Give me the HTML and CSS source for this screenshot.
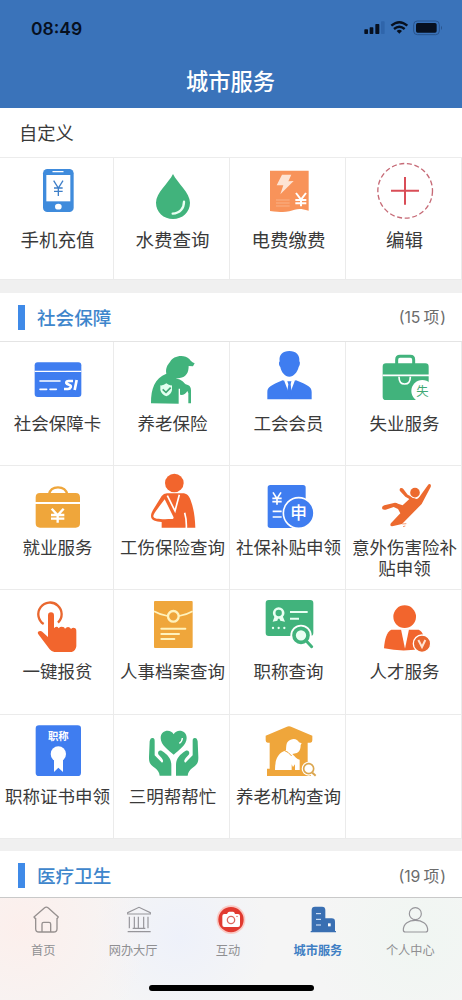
FILE: index.html
```html
<!DOCTYPE html>
<html lang="zh-CN">
<head>
<meta charset="utf-8">
<title>城市服务</title>
<link rel="stylesheet" href="styles.css">
</head>
<body>
<div class="app">
  <header class="top">
    <div class="status">
      <span class="time">08:49</span>
      <svg class="signals" width="80" height="20" viewBox="1089 54 240 60">
        <g fill="#07101f"><rect x="1093" y="88" width="11" height="14" rx="2"/><rect x="1109" y="82" width="11" height="20" rx="2"/><rect x="1126" y="72" width="12" height="30" rx="2"/><rect x="1248" y="69" width="62" height="29" rx="5"/><path d="M1190 93q8-7 16 0l-8 8z"/></g>
        <rect x="1143" y="64" width="11" height="38" rx="2" fill="#2f65ab"/>
        <g fill="none" stroke="#07101f" stroke-width="7"><path d="M1174 77q24-21 48 0"/><path d="M1182 87q16-14 32 0"/></g>
        <rect x="1241" y="63" width="77" height="41" rx="11" fill="none" stroke="#29548d" stroke-width="3"/><path d="M1323 77q6 6 0 13z" fill="#29548d"/>
      </svg>
    </div>
    <h1 class="title">城市服务</h1>
  </header>

  <section>
    <h2 class="custom-head">自定义</h2>
    <div class="grid grid-custom">
      <div class="cell">
        <svg class="icon" viewBox="22 9 300 213"><rect x="127" y="42" width="92" height="129" rx="13" fill="#3f8bdc"/><rect x="137" y="60" width="72" height="79" fill="#fff"/><path d="M157 50h30" stroke="#fff" stroke-width="4" stroke-linecap="round"/><ellipse cx="173" cy="155" rx="10" ry="8.500" fill="#fff"/><path d="M159 77l14 22 14-22M173 98v25M160 99h26M160 109h26" fill="none" stroke="#3f7fc8" stroke-width="4"/></svg>
        <span class="label">手机充值</span>
      </div>
      <div class="cell">
        <svg class="icon" viewBox="369 9 300 213"><path d="M519 57C506 84 468 113 468 143c0 28 23 49 51 49s51-21 51-49c0-30-38-59-51-86z" fill="#41b37c"/><path d="M552 140c0 20-12 35-34 36" fill="none" stroke="#eafff3" stroke-width="7" stroke-linecap="round"/></svg>
        <span class="label">水费查询</span>
      </div>
      <div class="cell">
        <svg class="icon" viewBox="22 9 300 213"><path d="M115 47h116v120c-28-9-38-5-58 2-18 4-29 2-58-1z" fill="#f8935a"/><path d="M151 59h28l-9 20 16-1-40 40 9-27h-20z" fill="#fde3d3"/><path d="M133 135h41M133 144h41M133 153h41" stroke="#fbc19d" stroke-width="2"/><path d="M193 114l15 20 15-20M208 132v22M191 135h33M191 145h33" fill="none" stroke="#fff" stroke-width="6"/></svg>
        <span class="label">电费缴费</span>
      </div>
      <div class="cell">
        <svg class="icon" viewBox="372 9 300 213"><circle cx="522.500" cy="107.500" r="82" fill="none" stroke="#c66a76" stroke-width="4" stroke-dasharray="15 8"/><path d="M522 66v83M480 107h84" stroke="#d94d57" stroke-width="6"/></svg>
        <span class="label">编辑</span>
      </div>
    </div>
  </section>

  <section class="group">
    <div class="group-head"><i class="bar"></i><h2 class="group-title">社会保障</h2><span class="count">(15<span class="unit">项</span>)</span></div>
    <div class="grid grid-services">
      <div class="cell">
        <svg class="icon" viewBox="22 171 300 213"><rect x="102" y="232" width="140" height="104" rx="9" fill="#3f7df0"/><path d="M102 259h140" stroke="#fff" stroke-width="4"/><path d="M118 288h60M118 313h20M148 313h19" stroke="#fff" stroke-width="5" stroke-linecap="round"/><path d="M217 288h-13q-8 0-7 6 1 3 8 5 7 2 5 8-2 5-8 5h-12M228 285l-6 30" fill="none" stroke="#fff" stroke-width="8"/></svg>
        <span class="label">社会保障卡</span>
      </div>
      <div class="cell">
        <svg class="icon" viewBox="369 171 300 213"><path d="M453 355c0-45 11-75 46-89-3-17 4-27 11-35 8-19 43-25 58-9 5 6 8 10 16 13l-5 9-13-1c0 19-7 34-27 36l-12 2c16 0 23 10 30 17 13 3 16 9 16 19v38h-8v-30l-3-7c-6 12-18 14-24 10l-1 28z" fill="#41b37c"/><path d="M538 311v46" stroke="#fff" stroke-width="4"/><path d="M499 295q8 7 17 6v14q-2 13-17 19-15-6-18-19v-14q10 1 18-6z" fill="#e3fff0"/><path d="M488 313l10 9 14-14" fill="none" stroke="#41a875" stroke-width="5"/></svg>
        <span class="label">养老保险</span>
      </div>
      <div class="cell">
        <svg class="icon" viewBox="22 171 300 213"><path d="M144 229c-3-20 9-31 29-31s32 11 30 31c3 2 2 13-2 17-4 16-15 29-28 29s-24-13-27-29c-5-4-5-15-2-17zM107 343v-22c0-14 10-20 46-35l20 6 20-6c38 15 47 21 47 35v22z" fill="#3f7df0"/><path d="M157 286l12 31 4-10 5 10 12-31-17 4z" fill="#fff"/><path d="M167 289h12l-2 9 4 33-8 12-8-12 5-33z" fill="#3f7df0"/></svg>
        <span class="label">工会会员</span>
      </div>
      <div class="cell">
        <svg class="icon" viewBox="372 171 300 213"><path d="M497 240v-16q0-10 10-10h31q10 0 10 10v16" fill="none" stroke="#41b37c" stroke-width="9"/><rect x="455" y="235" width="138" height="110" rx="10" fill="#41b37c"/><path d="M455 271h139M504 275q0 22 17 22t17-22" fill="none" stroke="#fff" stroke-width="5"/><circle cx="574" cy="318" r="33" fill="#fff"/><text x="574" y="332" text-anchor="middle" class="cjk" font-size="37" fill="#41a875">失</text></svg>
        <span class="label">失业服务</span>
      </div>

      <div class="cell">
        <svg class="icon" viewBox="22 3 300 213"><path d="M145 88q4-21 27-21t28 21" fill="none" stroke="#efa63b" stroke-width="7"/><path d="M105 111V97q0-13 13-13h107q13 0 13 13v14zM105 117h133v58q0 13-13 13H118q-13 0-13-13z" fill="#efa63b"/><path d="M153 131l18 20 18-20M171 148v25M151 150h40M151 161h40" fill="none" stroke="#fff" stroke-width="7"/></svg>
        <span class="label">就业服务</span>
      </div>
      <div class="cell">
        <svg class="icon" viewBox="369 3 300 213"><circle cx="523" cy="54" r="28" fill="#f2652d"/><path d="M485 188v-17c-18-2-32-4-32-18 0-7 3-12 6-18l26-42q6-8 16-8h46c14 0 20 7 25 21 9 24 13 49 14 82z" fill="#f2652d"/><path d="M494 103l26 52c2 5 0 7-5 7-28 1-56 1-55-9 0-7 19-29 34-50z" fill="#fff"/><path d="M502 92l23 46 13-49M554 143q6 20 5 46" fill="none" stroke="#fff" stroke-width="5"/></svg>
        <span class="label">工伤保险查询</span>
      </div>
      <div class="cell">
        <svg class="icon" viewBox="22 3 300 213"><rect x="108" y="60" width="114" height="129" rx="8" fill="#3f7df0"/><path d="M124 82l12 19 12-19M136 99v20M122 100h28M122 110h28M123 139h27M123 156h27" fill="none" stroke="#fff" stroke-width="5"/><circle cx="201" cy="144" r="46" fill="#3f7df0" stroke="#fff" stroke-width="5"/><text x="201" y="163" text-anchor="middle" class="cjk" font-size="50" font-weight="500" fill="#fff">申</text></svg>
        <span class="label">社保补贴申领</span>
      </div>
      <div class="cell">
        <svg class="icon" viewBox="372 3 300 213"><path d="M591 60q3-5 7-2 3 3 1 8l-27 51-59 60-26 6q-9 2-9-4 0-4 6-9l24-25-7-13-13-6-24 8q-11 2-11-5 0-6 7-8l32-8q5 0 9 3l14 5 20-19-12-7-16-17q-3-6 2-9 5-1 8 3l13 17 26 13q5 0 9-6z" fill="#ec6a2f"/><circle cx="552" cy="83" r="17" fill="#fff"/><circle cx="552" cy="83" r="14.500" fill="#ec6a2f"/><path d="M514 177l12-1M516 185l7-2" stroke="#ec6a2f" stroke-width="2"/></svg>
        <span class="label">意外伤害险补贴申领</span>
      </div>

      <div class="cell">
        <svg class="icon" viewBox="22 0 300 213"><path d="M129 102a35 35 0 1 1 43-4" fill="none" stroke="#e9672f" stroke-width="7"/><path d="M142 141V77q0-10 9-10t9 10v38q4-7 11-4l3 4q6-7 16-3l3 4q7-8 15-3l3 4q6-6 13-2 4 4 3 11v43q-2 14-14 17h-52q-9-1-14-8l-34-45q-4-7 2-9 7-4 13 4z" fill="#f2652d"/></svg>
        <span class="label">一键报贫</span>
      </div>
      <div class="cell">
        <svg class="icon" viewBox="369 0 300 213"><rect x="462" y="33" width="116" height="141" rx="3" fill="#efa63b"/><path d="M462 64q19 11 41 14M537 78q22-3 41-14" fill="none" stroke="#fff2bd" stroke-width="5"/><circle cx="520" cy="79" r="16" fill="#efa63b" stroke="#fff2bd" stroke-width="7"/><path d="M484 116h72M484 132h53M484 147h39" stroke="#fff2bd" stroke-width="6" stroke-linecap="round"/></svg>
        <span class="label">人事档案查询</span>
      </div>
      <div class="cell">
        <svg class="icon" viewBox="22 0 300 213"><rect x="102" y="30" width="143" height="108" rx="9" fill="#41b37c"/><path d="M130 76l-7 19 14-3 4-11 5 11 14 3-8-19" fill="#e9fff2"/><circle cx="141" cy="69" r="13.500" fill="#41b37c" stroke="#e9fff2" stroke-width="8"/><path d="M175 66h53M175 86h27" stroke="#e9fff2" stroke-width="6"/><g fill="#e9fff2"><circle cx="124" cy="114" r="3.500"/><circle cx="141" cy="114" r="3.500"/><circle cx="158" cy="114" r="3.500"/></g><circle cx="208" cy="136" r="32" fill="#fff"/><path d="M224 153l16 17" stroke="#41b37c" stroke-width="9" stroke-linecap="round"/><circle cx="208" cy="136" r="21" fill="#eafff3" stroke="#41b37c" stroke-width="11"/></svg>
        <span class="label">职称查询</span>
      </div>
      <div class="cell">
        <svg class="icon" viewBox="372 0 300 213"><circle cx="521" cy="80" r="34" fill="#f2652d"/><path d="M459 175c2-27 8-50 22-56h82c14 6 19 26 21 55q-65 14-125 1z" fill="#f2652d"/><path d="M510 118l12 58 12-58z" fill="#fff"/><circle cx="573" cy="161" r="26" fill="#e9672f" stroke="#fff" stroke-width="4"/><path d="M562 150l11 21 10-21" fill="none" stroke="#ffe3d2" stroke-width="6"/></svg>
        <span class="label">人才服务</span>
      </div>

      <div class="cell">
        <svg class="icon" viewBox="22 3 300 213"><rect x="105" y="34" width="136" height="152" rx="10" fill="#3f7df0"/><text x="173" y="78" text-anchor="middle" class="cjk" font-size="31" font-weight="700" fill="#fff">职称</text><path d="M160 132h27v42l-14-13-13 13z" fill="#fff"/><circle cx="173" cy="120" r="23" fill="#fff"/></svg>
        <span class="label">职称证书申领</span>
      </div>
      <div class="cell">
        <svg class="icon" viewBox="369 3 300 213"><g fill="#41b37c"><path d="M521 122c-15-13-39-29-39-50 0-25 31-28 39-11 8-17 39-14 39 11 0 21-24 37-39 50z"/><path d="M449 82q2-11 9-10c5 1 6 3 6 10v42l22 22c5-3 4-7-1-14l-9-10c-5-7 1-16 10-11 17 11 28 23 28 42v32h-35q-2-14-13-22c-19-14-19-20-19-34z"/><path d="M593 82q-2-11-9-10c-5 1-6 3-6 10v42l-22 22c-5-3-4-7 1-14l9-10c5-7-1-16-10-11-17 11-28 23-28 42v32h35q2-14 13-22c19-14 19-20 19-34z"/></g><path d="M547 72q0 10-9 16" fill="none" stroke="#fff" stroke-width="4"/></svg>
        <span class="label">三明帮帮忙</span>
      </div>
      <div class="cell">
        <svg class="icon" viewBox="22 3 300 213"><path d="M102 79V65l62-26q8-4 16 0l62 26v14q0 7-6 7h-8v67h10v33H106v-22h8V86h-6q-6 0-6-7z" fill="#efa63b"/><path d="M130 168c0-33 9-51 33-59 1-15 0-27 14-32 12-5 21 0 25 8l8 3-3 5c0 13-4 23-15 25l-10 2c9 9 13 15 22 17v31h-14v-17l-6 8-4-8v17z" fill="#fff"/><path d="M157 109q13 4 23 17" fill="none" stroke="#efa63b" stroke-width="3"/><circle cx="231" cy="164" r="21" fill="#fff"/><circle cx="231" cy="164" r="15" fill="#fff" stroke="#dba64f" stroke-width="5"/><path d="M242 176l10 9" stroke="#dba64f" stroke-width="6"/></svg>
        <span class="label">养老机构查询</span>
      </div>
      <div class="cell"></div>
    </div>
  </section>

  <section class="group">
    <div class="group-head last"><i class="bar"></i><h2 class="group-title">医疗卫生</h2><span class="count">(19<span class="unit">项</span>)</span></div>
  </section>

  <nav class="tabs">
    <div class="tab">
      <svg class="tab-icon" viewBox="95 203 90 96"><g fill="none" stroke="#96908f" stroke-width="4" stroke-linejoin="round" stroke-linecap="round"><path d="M109 249v31q0 10 10 10h44q10 0 10-10v-31M104 245l31-27q6-5 12 0l30 27-4 6M104 245l5 6M128 289v-23q0-5 5-5h16q5 0 5 5v23"/></g></svg>
      <span class="tab-label short">首页</span>
    </div>
    <div class="tab">
      <svg class="tab-icon" viewBox="370 203 90 96"><path d="M381 236v-4l34-16 34 16v4zM386 244v35M401 244v35M413 244v35M429 244v35M442 244v35M396 279h38M381 289h69" fill="none" stroke="#96959a" stroke-width="3.500"/></svg>
      <span class="tab-label">网办大厅</span>
    </div>
    <div class="tab">
      <svg class="tab-icon" viewBox="648 203 90 96"><circle cx="693" cy="253" r="43" fill="#fac9c4"/><circle cx="693" cy="253" r="38" fill="#e13a30"/><path d="M673 236h8q3-7 7-7h11q4 0 6 7h9q6 0 6 6v27q0 6-6 6h-41q-6 0-6-6v-27q0-6 6-6z" fill="#fff"/><circle cx="693" cy="254" r="11" fill="#fff" stroke="#dd685f" stroke-width="4"/><circle cx="711" cy="243" r="2" fill="#e13a30"/></svg>
      <span class="tab-label short">互动</span>
    </div>
    <div class="tab">
      <svg class="tab-icon" viewBox="925 203 90 96"><path d="M936 287v-63q0-10 10-10h21q10 0 10 10v25h19q10 0 10 10v28h3v4h-76v-4z" fill="#396fb2"/><path d="M949 235h15M949 252h15M949 269h15" stroke="#e5f0ff" stroke-width="3"/><rect x="985" y="264" width="8" height="9" fill="#fff"/></svg>
      <span class="tab-label active">城市服务</span>
    </div>
    <div class="tab">
      <svg class="tab-icon" viewBox="1202 203 90 96"><g fill="none" stroke="#96959a" stroke-width="3.500"><circle cx="1245" cy="235" r="18"/><path d="M1209 284c0-20 17-29 36-29s37 9 37 29q0 6-6 6h-61q-6 0-6-6z"/></g></svg>
      <span class="tab-label">个人中心</span>
    </div>
    <div class="home-indicator"></div>
  </nav>
</div>
</body>
</html>
```

FILE: styles.css
```css
* { box-sizing: border-box; }

body {
  margin: 0;
  background: #fff;
  color: #3a3a3a;
  font-family: Inter, "Noto Sans CJK SC", sans-serif;
}

h1, h2 { margin: 0; font-weight: 400; }
svg { display: block; }
.cjk { font-family: "Noto Sans CJK SC", sans-serif; }

.app {
  width: 462px;
  height: 1000px;
  overflow: hidden;
  display: flex;
  flex-direction: column;
}

.top {
  height: 108px;
  background: #3a73ba;
  flex: none;
}
.status {
  height: 56px;
  padding: 0 19px 0 31px;
  display: flex;
  align-items: center;
  justify-content: space-between;
}
.time {
  font-size: 17.5px;
  font-weight: 600;
  color: #07101f;
}
.title {
  height: 52px;
  padding-right: 1px;
  line-height: 52px;
  text-align: center;
  color: #fff;
  font-size: 22.3px;
  font-weight: 500;
}

.custom-head {
  height: 50px;
  padding-left: 19px;
  border-bottom: 1px solid #ececec;
  font-size: 18.3px;
  line-height: 51px;
}

.grid {
  display: grid;
  grid-template-columns: 114px 116px 116px 116px;
}
.grid-custom { grid-template-rows: 122px; }
.grid-services { grid-template-rows: 124px 124px 125px 124px; }

.cell {
  border-right: 1px solid #ebebeb;
  border-bottom: 1px solid #ebebeb;
  padding-left: 2px;
  display: flex;
  flex-direction: column;
  align-items: center;
}
.icon {
  width: 100px;
  height: 71px;
  flex: none;
}
.label {
  width: 108px;
  margin-top: 1px;
  text-align: center;
  font-size: 17.5px;
  line-height: 20.5px;
}
.grid-custom .label { font-size: 18.5px; }

.group { border-top: 13px solid #f0f0f0; }
.group + .group { border-top-width: 12px; }
.group-head {
  height: 49px;
  padding: 0 16px 0 18px;
  border-bottom: 1px solid #e4e4e4;
  display: flex;
  align-items: center;
}
.group-head.last { height: 46px; border-bottom: 0; padding-top: 3px; }
.bar {
  width: 7px;
  height: 25px;
  margin-right: 12px;
  background: #3f8ae8;
}
.group-title {
  flex: 1;
  padding-bottom: 2px;
  color: #3e86cc;
  font-size: 18.6px;
  font-weight: 500;
}
.count {
  padding-bottom: 1px;
  color: #6c6c6c;
  font-size: 15.8px;
}
.unit { margin: 0 1px 0 3px; }

.tabs {
  height: 103px;
  border-top: 1px solid #c9c9c9;
  background:
    radial-gradient(circle at 20px 30px, #fcefec 0, transparent 130px),
    radial-gradient(circle at 180px 40px, #eef1fa 0, transparent 90px),
    radial-gradient(circle at 420px 40px, #f0f6f2 0, transparent 110px),
    #f5f5f5;
  display: grid;
  grid-template-columns: repeat(5, 1fr);
  grid-template-rows: 84px 19px;
}
.tab {
  padding-top: 5px;
  display: flex;
  flex-direction: column;
  align-items: center;
}
.tab-icon { width: 30px; height: 32px; }
.tab-label {
  margin-top: 7px;
  padding-right: 11px;
  color: #8f8f92;
  font-size: 12.2px;
  line-height: 18px;
}
.tab-label.short { padding-right: 6px; }
.tab-label.active { color: #3f7fc4; font-weight: 700; }
.home-indicator {
  grid-column: 1 / -1;
  justify-self: center;
  width: 165px;
  height: 6px;
  margin-top: 3px;
  border-radius: 3px;
  background: #000;
}
```
